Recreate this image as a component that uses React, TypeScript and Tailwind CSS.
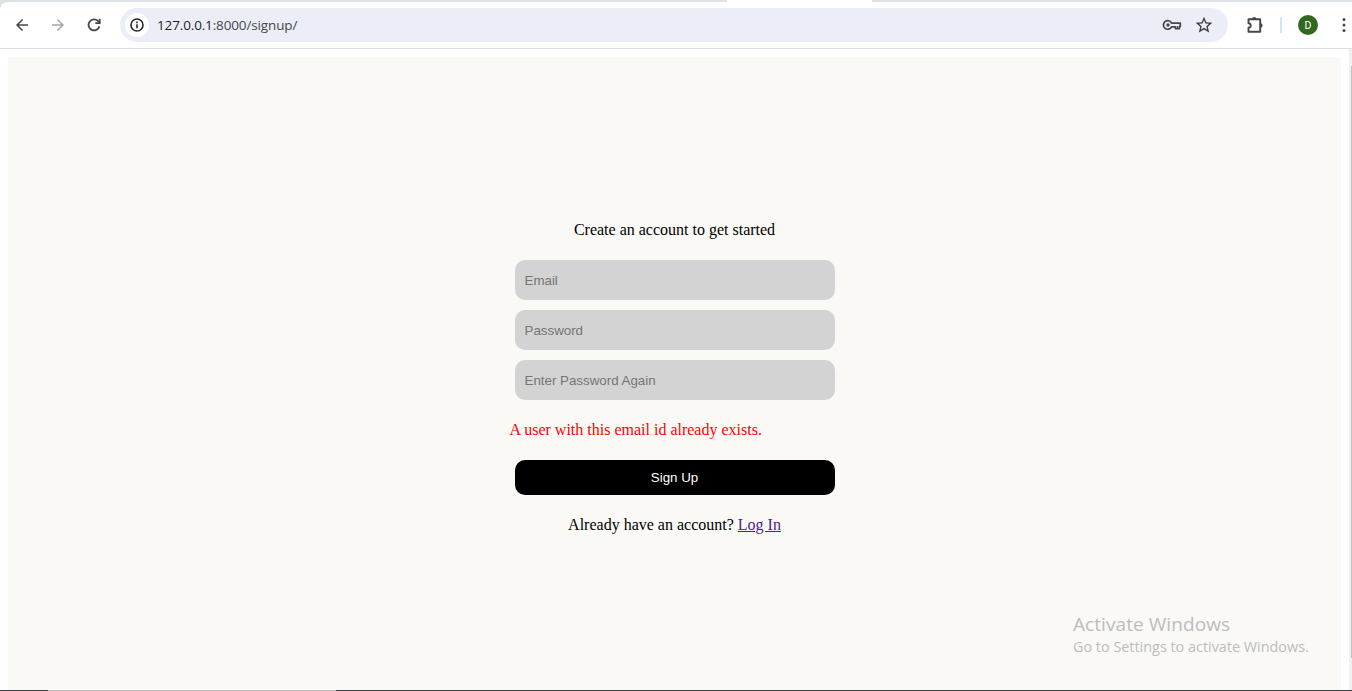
import React from "react";
import { MdArrowBack, MdArrowForward, MdStarBorder } from "react-icons/md";

function ReloadIcon() {
  return (
    <svg width="14" height="14" viewBox="0 0 14 14" fill="none" stroke="#474747" strokeWidth="1.8">
      <path d="M12.4 8.2A5.5 5.5 0 1 1 11.1 3.2L12.6 4.9" />
      <path d="M12.7 0.8V5.1H8.3" />
    </svg>
  );
}

function InfoIcon() {
  return (
    <svg width="14" height="14" viewBox="0 0 14 14" fill="none" stroke="#28292b" strokeWidth="1.6">
      <circle cx="7" cy="7" r="6" />
      <path d="M7 6.2V10.2M7 3.6V5.2" />
    </svg>
  );
}

function KeyIcon() {
  return (
    <svg width="20" height="12" viewBox="0 0 20 12" fill="none" stroke="#474747" strokeWidth="1.7">
      <path d="M9.6 4.1H18.3V7.4H17.4V9.6H13.4V7.8H9.6A4.3 4.3 0 1 1 9.6 4.1Z" strokeLinejoin="round" />
      <circle cx="6" cy="6" r="1.7" fill="#474747" stroke="none" />
      <path d="M15.4 7V9" strokeWidth="1.2" />
    </svg>
  );
}

function ExtensionIcon() {
  return (
    <svg width="18" height="18" viewBox="0 0 18 18">
      <path
        d="M2.5 3.2H14.2V15.7H2.5V11.7A2.2 2.2 0 0 0 2.5 7.3Z"
        fill="none"
        stroke="#474747"
        strokeWidth="1.9"
        strokeLinejoin="round"
      />
      <path d="M6 3.2A2.2 2.2 0 0 1 10.4 3.2ZM14.4 7.3A2.2 2.2 0 0 1 14.4 11.7Z" fill="#474747" />
    </svg>
  );
}

function Toolbar() {
  return (
    <header className="flex h-[49px] shrink-0 flex-col border-b border-[#dedede] bg-[#dee1e6]">
      <div className="flex h-[2px] shrink-0 justify-start pl-[727px]">
        <div className="h-[2px] w-[145px] bg-white" />
      </div>
      <div className="flex h-[46px] items-center rounded-tl-lg bg-white pl-[13px]">
        <MdArrowBack size={18} color="#474747" className="shrink-0" />
        <MdArrowForward size={18} color="#a8a8a8" className="ml-[18px] shrink-0" />
        <div className="ml-5 shrink-0">
          <ReloadIcon />
        </div>
        <div className="ml-[19px] flex h-[34px] w-[1108px] shrink-0 items-center rounded-full bg-[#ebeef7] pl-[5px] pr-[14px]">
          <div className="flex size-6 items-center justify-center rounded-full bg-white">
            <InfoIcon />
          </div>
          <span className="ml-2 flex-1 whitespace-nowrap font-['Open_Sans',sans-serif] text-[13.5px] leading-5 tracking-[-0.14px] text-[#474747]">
            <span className="text-[#1f1f1f]">127.0.0.1</span>:8000/signup/
          </span>
          <KeyIcon />
          <MdStarBorder size={20} color="#3c3c3c" className="ml-3" />
        </div>
        <div className="ml-[18px] shrink-0">
          <ExtensionIcon />
        </div>
        <div className="ml-4 h-4 w-[2px] shrink-0 bg-[#d3e3fd]" />
        <div className="ml-4 flex size-5 shrink-0 items-center justify-center rounded-full bg-[#33691e] pt-0.5 font-['Roboto',sans-serif] text-[10.5px] leading-none text-white">
          D
        </div>
        <svg className="ml-6 shrink-0" width="4" height="16" viewBox="0 0 4 16" fill="#474747">
          <circle cx="2" cy="2.5" r="1.5" />
          <circle cx="2" cy="8" r="1.5" />
          <circle cx="2" cy="13.5" r="1.5" />
        </svg>
      </div>
    </header>
  );
}

const inputClass =
  "mb-[10px] h-10 w-80 rounded-[10px] bg-[#d3d3d3] pl-[10px] pr-[10px] font-['Liberation_Sans',sans-serif] text-[13.333px] text-black outline-none placeholder:text-[#757575]";

function SignupForm() {
  return (
    <form className="flex w-[330px] flex-col items-center pt-[163px]">
      <p className="mb-[21px] h-[19px] whitespace-nowrap leading-[19px]">Create an account to get started</p>
      <input className={inputClass} type="email" placeholder="Email" />
      <input className={inputClass} type="password" placeholder="Password" />
      <input className={inputClass} type="password" placeholder="Enter Password Again" />
      <p className="mb-[21px] mt-[10px] h-[19px] self-start whitespace-nowrap leading-[19px] text-[#ff0000]">
        A user with this email id already exists.
      </p>
      <button
        type="button"
        className="h-[35px] w-80 rounded-[10px] bg-black font-['Liberation_Sans',sans-serif] text-[13.333px] text-white"
      >
        Sign Up
      </button>
      <p className="mt-5 whitespace-nowrap leading-[19px]">
        Already have an account?{" "}
        <a href="#" className="text-[#551a8b] underline">
          Log In
        </a>
      </p>
    </form>
  );
}

export default function App() {
  return (
    <div className="relative flex h-[691px] w-[1352px] flex-col overflow-hidden bg-white">
      <Toolbar />
      <div className="flex min-h-0 flex-1">
        <main className="ml-2 mt-2 flex w-[1333px] shrink-0 justify-center bg-[#faf9f6] font-['Liberation_Serif',serif] text-[16px] text-black">
          <SignupForm />
        </main>
        <div className="ml-2 flex w-[3px] shrink-0 justify-end bg-[#f1f1f1] pt-[17px]">
          <div className="h-[592px] w-px bg-[#c1c1c1]" />
        </div>
      </div>
      <div className="flex h-px shrink-0 bg-[#2f4548]">
        <div className="ml-12 h-px w-72 bg-[#c3c1c1]" />
      </div>
      <div className="pointer-events-none absolute left-[1073px] top-[612px] whitespace-nowrap font-['Open_Sans',sans-serif] text-[#bdbdbb]">
        <div className="text-[19px] leading-[25px] tracking-[0.07px]">Activate Windows</div>
        <div className="text-[14.4px] leading-5">Go to Settings to activate Windows.</div>
      </div>
    </div>
  );
}
